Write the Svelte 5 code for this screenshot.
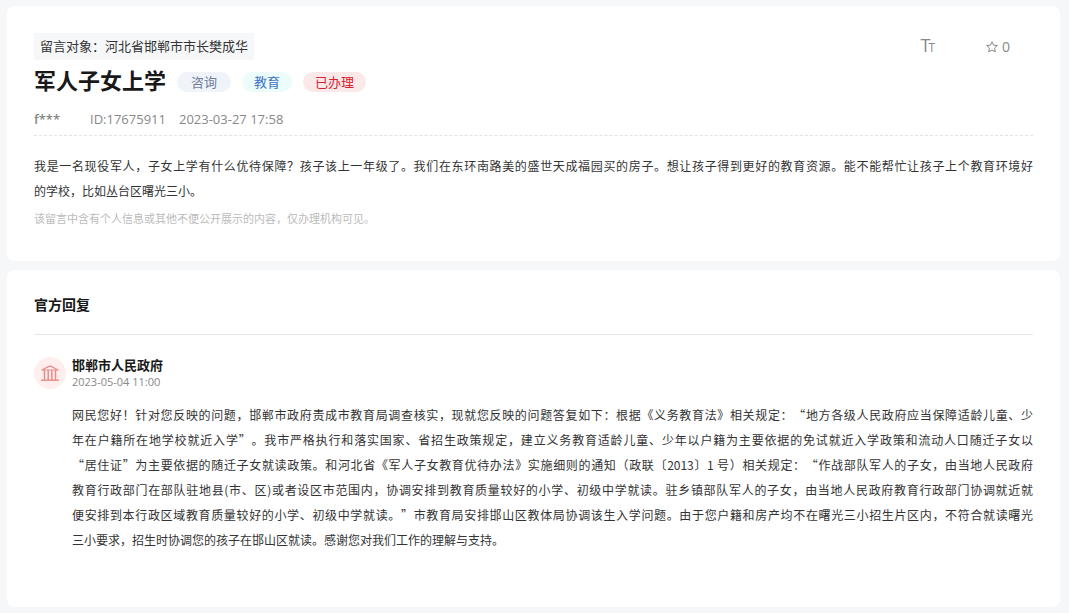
<script>
  const tags = [
    { label: "咨询", kind: "type" },
    { label: "教育", kind: "field" },
    { label: "已办理", kind: "status" },
  ];

  const message = [
    "我是一名现役军人，子女上学有什么优待保障？孩子该上一年级了。我们在东环南路美的盛世天成福园买的房子。想让孩子得到更好的教育资源。能不能帮忙让孩子上个教育环境好",
    "的学校，比如丛台区曙光三小。",
  ];

  const reply = [
    "网民您好！针对您反映的问题，邯郸市政府责成市教育局调查核实，现就您反映的问题答复如下：根据《义务教育法》相关规定：“地方各级人民政府应当保障适龄儿童、少",
    "年在户籍所在地学校就近入学”。我市严格执行和落实国家、省招生政策规定，建立义务教育适龄儿童、少年以户籍为主要依据的免试就近入学政策和流动人口随迁子女以",
    "“居住证”为主要依据的随迁子女就读政策。和河北省《军人子女教育优待办法》实施细则的通知（政联〔2013〕1 号）相关规定：“作战部队军人的子女，由当地人民政府",
    "教育行政部门在部队驻地县(市、区)或者设区市范围内，协调安排到教育质量较好的小学、初级中学就读。驻乡镇部队军人的子女，由当地人民政府教育行政部门协调就近就",
    "便安排到本行政区域教育质量较好的小学、初级中学就读。”市教育局安排邯山区教体局协调该生入学问题。由于您户籍和房产均不在曙光三小招生片区内，不符合就读曙光",
    "三小要求，招生时协调您的孩子在邯山区就读。感谢您对我们工作的理解与支持。",
  ];

  let stars = 0;
  let starred = false;

  function handleStarClick() {
    starred = !starred;
    stars += starred ? 1 : -1;
  }
</script>

<style>
  :global(body) {
    background-color: #f6f7f9;
  }

  .page {
    display: flex;
    flex-direction: column;
    gap: 9px;
    padding: 6px 9px 6px 7px;
    font-family: "Open Sans", "Noto Sans CJK SC", sans-serif;
    font-size: 13px;
    color: #333;
  }

  .card {
    padding: 27px;
    border-radius: 8px;
    background-color: #fff;
  }

  .card__top {
    display: flex;
    justify-content: space-between;
    align-items: center;
    height: 27px;
  }

  .card__target {
    padding: 0 6px;
    line-height: 27px;
    background-color: #f6f7f9;
  }

  .tools {
    display: flex;
    align-items: center;
    gap: 51px;
    padding-right: 23px;
  }

  .tools__btn {
    display: flex;
    align-items: center;
    gap: 4px;
    padding: 0;
    border: 0;
    background: none;
    color: #888;
    font-family: inherit;
    font-size: 14px;
    line-height: 28px;
    cursor: pointer;
  }

  .tools__btn--size {
    align-items: baseline;
    gap: 0;
    font-size: 12px;
  }

  .tools__big {
    margin-right: -2px;
    font-size: 18px;
  }

  .headline {
    display: flex;
    align-items: center;
    gap: 11px;
    height: 44px;
  }

  .headline__title {
    margin: 0;
    padding-bottom: 4px;
    font-size: 22px;
    line-height: 36px;
    color: #191919;
  }

  .tag {
    padding: 0 12px;
    border-radius: 10px;
    line-height: 20px;
  }

  .tag--type {
    padding: 0 14px;
    color: #6e7f9c;
    background-color: #f0f3fa;
  }

  .tag--field {
    color: #3d73c4;
    background-color: #ecfcfa;
  }

  .tag--status {
    color: #d8232f;
    background-color: #fbe9ea;
  }

  .meta {
    display: flex;
    gap: 13px;
    line-height: 31px;
    color: #888;
    border-bottom: 1px dashed #e3e3e3;
  }

  .meta__user {
    width: 43px;
    font-weight: 600;
  }

  .text {
    margin: 0;
    font-family: "Noto Sans CJK SC", sans-serif;
    font-size: 12px;
    line-height: 25px;
    text-spacing-trim: space-all;
  }

  .text--message {
    margin: 17px 0 1px;
  }

  .text__line {
    display: block;
    text-align: justify;
    text-align-last: justify;
  }

  .text__line:last-child {
    text-align-last: start;
  }

  .note {
    margin: 0;
    font-size: 11px;
    line-height: 30px;
    color: #bbb;
  }

  .card__title {
    margin: 0;
    padding-bottom: 21px;
    font-size: 14px;
    line-height: 16px;
    color: #191919;
    border-bottom: 1px solid #e5e5e5;
  }

  .reply {
    display: grid;
    grid-template-columns: 32px 1fr;
    column-gap: 6px;
    row-gap: 12px;
    padding: 22px 0 28px;
  }

  .reply__avatar {
    display: flex;
    align-items: center;
    justify-content: center;
    height: 32px;
    border-radius: 50%;
    background-color: #ffeeee;
  }

  .reply__name {
    margin: 0;
    font-size: 13px;
    line-height: 16px;
    color: #191919;
  }

  .reply__date {
    display: block;
    font-size: 11px;
    line-height: 17px;
    color: #888;
  }

  .reply .text {
    grid-column: 2;
  }
</style>

<main class="page" lang="zh-CN">
  <section class="card">
    <div class="card__top">
      <div class="card__target">留言对象：河北省邯郸市市长樊成华</div>
      <div class="tools">
        <button class="tools__btn tools__btn--size" aria-label="字号">
          <span class="tools__big">T</span><span>T</span>
        </button>
        <button class="tools__btn" aria-pressed={starred} on:click={handleStarClick}>
          <svg width="12" height="12" viewBox="0 0 12 12" fill="none" stroke="currentColor" stroke-linejoin="round">
            <path d="M6 .8 7.6 4.1 11.3 4.6 8.6 7.1 9.3 10.8 6 9.1 2.7 10.8 3.4 7.1 .7 4.6 4.4 4.1Z" />
          </svg>
          <span>{stars}</span>
        </button>
      </div>
    </div>
    <div class="headline">
      <h1 class="headline__title">军人子女上学</h1>
      {#each tags as tag}
        <span class="tag tag--{tag.kind}">{tag.label}</span>
      {/each}
    </div>
    <div class="meta">
      <span class="meta__user">f***</span>
      <span>ID:17675911</span>
      <time>2023-03-27 17:58</time>
    </div>
    <p class="text text--message">
      {#each message as line}
        <span class="text__line">{line}</span>
      {/each}
    </p>
    <p class="note">该留言中含有个人信息或其他不便公开展示的内容，仅办理机构可见。</p>
  </section>

  <section class="card">
    <h2 class="card__title">官方回复</h2>
    <article class="reply">
      <div class="reply__avatar">
        <svg width="18" height="16" viewBox="0 0 18 16" fill="none" stroke="#e88b87">
          <path d="M.8 5 9 .9 17.2 5Z" stroke-width="1.2" stroke-linejoin="round" />
          <path d="M3.5 5v10M7.2 5v10M10.8 5v10M14.5 5v10" stroke-width="1.5" />
          <path d="M0 15.2h18" stroke-width="1.4" />
        </svg>
      </div>
      <header>
        <h3 class="reply__name">邯郸市人民政府</h3>
        <time class="reply__date">2023-05-04 11:00</time>
      </header>
      <p class="text">
        {#each reply as line}
          <span class="text__line">{line}</span>
        {/each}
      </p>
    </article>
  </section>
</main>
